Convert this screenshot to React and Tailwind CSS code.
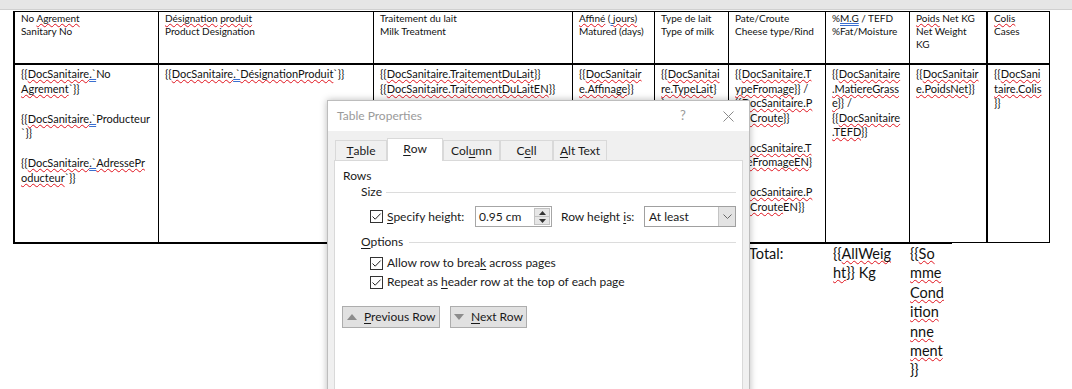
import React from "react";

const R = ({ children }) => (
  <span className="underline decoration-wavy decoration-[#e0141e] decoration-1 underline-offset-[1px] [text-decoration-skip-ink:none]">
    {children}
  </span>
);
const B = ({ children }) => (
  <span className="underline decoration-double decoration-[#3a6fd0] decoration-1 underline-offset-[1px] [text-decoration-skip-ink:none]">
    {children}
  </span>
);
const K = ({ children }) => <span className="underline decoration-1 underline-offset-[2px]">{children}</span>;

const cols = [
  {
    w: "w-[144px] border-r",
    head: [<>No <R>Agrement</R></>, <>Sanitary No</>],
    body: [
      <>{"{{"}<R>DocSanitaire</R><B>.`</B>No</>,
      <><R>Agrement</R>{"`}}"}</>,
      null,
      <>{"{{"}<R>DocSanitaire</R><B>.`</B>Producteur</>,
      <>{"`}}"}</>,
      null,
      <>{"{{"}<R>DocSanitaire</R><B>.`</B><R>AdressePr</R></>,
      <><R>oducteur</R>{"`}}"}</>,
    ],
  },
  {
    w: "w-[215px] border-r",
    head: [<><R>Désignation</R> <R>produit</R></>, <>Product Designation</>],
    body: [<>{"{{"}<R>DocSanitaire</R><B>.`</B><R>DésignationProduit</R>{"`}}"}</>],
  },
  {
    w: "w-[199px] border-r",
    head: [<>Traitement du lait</>, <>Milk Treatment</>],
    body: [
      <>{"{{"}<R>DocSanitaire.TraitementDuLait</R>{"}}"}</>,
      <>{"{{"}<R>DocSanitaire.TraitementDuLaitEN</R>{"}}"}</>,
    ],
  },
  {
    w: "w-[82px] border-r",
    head: [<><R>Affiné</R> (<B> </B><R>jours)</R></>, <>Matured (days)</>],
    body: [<>{"{{"}<R>DocSanitair</R></>, <><R>e.Affinage</R>{"}}"}</>],
  },
  {
    w: "w-[74px] border-r",
    head: [<>Type de lait</>, <>Type of milk</>],
    body: [<>{"{{"}<R>DocSanitai</R></>, <><R>re.TypeLait</R>{"}"}</>, <>{"}"}</>],
  },
  {
    w: "w-[97px] border-r",
    head: [<>Pate/Croute</>, <>Cheese type/Rind</>],
    body: [
      <>{"{{"}<R>DocSanitaire.T</R></>,
      <><R>ypeFromage</R>{"}} /"}</>,
      <>{"{{"}<R>DocSanitaire.P</R></>,
      <><R>ateCroute</R>{"}}"}</>,
      null,
      <>{"{{"}<R>DocSanitaire.T</R></>,
      <><R>ypeFromageEN</R>{"}"}</>,
      null,
      <>{"{{"}<R>DocSanitaire.P</R></>,
      <><R>ateCroute</R>EN{"}}"}</>,
    ],
  },
  {
    w: "w-[84px] border-r",
    head: [<>%<B>M.G</B> / TEFD</>, <>%Fat/Moisture</>],
    body: [
      <>{"{{"}<R>DocSanitaire</R></>,
      <><R>.MatiereGrass</R></>,
      <><R>e</R>{"}} /"}</>,
      <>{"{{"}<R>DocSanitaire</R></>,
      <><R>.TEFD</R>{"}}"}</>,
    ],
  },
  {
    w: "w-[78px] border-r-2",
    head: [<><R>Poids</R> Net KG</>, <>Net Weight</>, <>KG</>],
    body: [<>{"{{"}<R>DocSanitair</R></>, <><R>e.PoidsNet</R>{"}}"}</>],
  },
  {
    w: "w-[62px] border-r",
    head: [<><R>Colis</R></>, <>Cases</>],
    body: [<>{"{{"}<R>DocSani</R></>, <><R>taire.Colis</R></>, <>{"}}"}</>],
  },
];

function Lines({ lines }) {
  return lines.map((l, i) =>
    l === null ? (
      <div key={i} className="h-[15.5px]" />
    ) : (
      <div key={i} className="whitespace-nowrap">
        {l}
      </div>
    )
  );
}

function Check() {
  return (
    <div className="w-[13px] h-[13px] border border-[#333333] bg-white flex items-center justify-center shrink-0">
      <svg width="11" height="11" viewBox="0 0 11 11">
        <path d="M1.5 5.5 L4.2 8.2 L9.6 2.6" fill="none" stroke="#222" strokeWidth="1" />
      </svg>
    </div>
  );
}

function Tab({ children, w, sel }) {
  if (sel)
    return (
      <div className={`${w} h-[23px] mb-[-1px] relative z-10 bg-white border border-b-0 border-[#d9d9d9] flex items-center justify-center pb-[2px]`}>
        {children}
      </div>
    );
  return (
    <div className={`${w} h-[20px] bg-[#f0f0f0] border border-b-0 border-[#d9d9d9] flex items-center justify-center`}>
      {children}
    </div>
  );
}

function Dialog() {
  return (
    <div className="absolute left-[327px] top-[100px] w-[423px] h-[300px] border border-[#bdbdbd] bg-[#f0f0f0] shadow-[0_0_7px_rgba(0,0,0,0.28)] font-['Lato',sans-serif] text-[12px] text-[#1a1a1a]">
      <div className="h-[30px] bg-white flex items-center">
        <div className="pl-[9px] text-[#9a9a9a] flex-1">Table Properties</div>
        <div className="w-[48px] text-center text-[#9a9a9a] text-[13px]">?</div>
        <div className="w-[42px] flex items-center justify-center">
          <svg width="11" height="11" viewBox="0 0 11 11">
            <path d="M0.5 0.5 L10.5 10.5 M10.5 0.5 L0.5 10.5" stroke="#8a8a8a" strokeWidth="1" fill="none" />
          </svg>
        </div>
      </div>
      <div className="px-[6px] pt-[7px]">
        <div className="flex items-end pl-[1px]">
          <Tab w="w-[52px]"><K>T</K>able</Tab>
          <Tab w="w-[56px]" sel><K>R</K>ow</Tab>
          <Tab w="w-[57px]">Col<K>u</K>mn</Tab>
          <Tab w="w-[53px]">C<K>e</K>ll</Tab>
          <Tab w="w-[54px]"><K>A</K>lt Text</Tab>
        </div>
        <div className="h-[240px] bg-white border border-[#d9d9d9] leading-[16px]">
          <div className="pl-[8px] mt-[7px]">Rows</div>
          <div className="flex items-center pl-[26px] pr-[6px]">
            <span>Size</span>
            <div className="flex-1 ml-[4px] h-px bg-[#dcdcdc]" />
          </div>
          <div className="flex items-center mt-[6px] h-[21px] pl-[35px]">
            <Check />
            <div className="ml-[4px] w-[88px]"><K>S</K>pecify height:</div>
            <div className="w-[77px] h-[21px] border border-[#a6a6a6] bg-white flex items-center">
              <div className="flex-1 pl-[3px]">0.95 cm</div>
              <div className="w-[16px] h-[17px] mr-[1px] border border-[#c2c2c2] bg-[#e6e6e6] flex flex-col">
                <div className="flex-1 flex items-center justify-center border-b border-[#c2c2c2]">
                  <svg width="7" height="4" viewBox="0 0 7 4"><path d="M0 4 L3.5 0 L7 4Z" fill="#333" /></svg>
                </div>
                <div className="flex-1 flex items-center justify-center">
                  <svg width="7" height="4" viewBox="0 0 7 4"><path d="M0 0 L3.5 4 L7 0Z" fill="#333" /></svg>
                </div>
              </div>
            </div>
            <div className="ml-[9px] w-[83px]">Row height <K>i</K>s:</div>
            <div className="w-[92px] h-[21px] border border-[#a0a0a0] bg-white flex items-center">
              <div className="flex-1 pl-[4px]">At least</div>
              <div className="w-[17px] h-full bg-[#e3e3e3] border-l border-[#c4c4c4] flex items-center justify-center">
                <svg width="9" height="5" viewBox="0 0 9 5"><path d="M0.5 0.5 L4.5 4.5 L8.5 0.5" fill="none" stroke="#666" strokeWidth="1" /></svg>
              </div>
            </div>
          </div>
          <div className="flex items-center mt-[7px] pl-[26px] pr-[6px]">
            <span><K>O</K>ptions</span>
            <div className="flex-1 ml-[6px] h-px bg-[#dcdcdc]" />
          </div>
          <div className="flex items-center mt-[5px] pl-[35px]">
            <Check />
            <div className="ml-[4px]">Allow row to brea<K>k</K> across pages</div>
          </div>
          <div className="flex items-center mt-[3px] pl-[35px]">
            <Check />
            <div className="ml-[4px]">Repeat as <K>h</K>eader row at the top of each page</div>
          </div>
          <div className="flex mt-[16px] pl-[7px] gap-[10px]">
            <div className="w-[98px] h-[22px] border border-[#adadad] bg-[#e1e1e1] flex items-center pl-[4px]">
              <svg width="10" height="6" viewBox="0 0 10 6"><path d="M0 6 L5 0 L10 6Z" fill="#8c8c8c" /></svg>
              <span className="ml-[7px]"><K>P</K>revious Row</span>
            </div>
            <div className="w-[77px] h-[22px] border border-[#adadad] bg-[#e1e1e1] flex items-center pl-[3px]">
              <svg width="10" height="6" viewBox="0 0 10 6"><path d="M0 0 L5 6 L10 0Z" fill="#8c8c8c" /></svg>
              <span className="ml-[7px]"><K>N</K>ext Row</span>
            </div>
          </div>
        </div>
      </div>
    </div>
  );
}

export default function App() {
  return (
    <div className="relative w-[1072px] h-[389px] overflow-hidden bg-white text-black">
      <div className="h-[10px] bg-[#e6e6e6] border-b border-[#d0d0d0]" />
      <div className="mt-[1px] ml-[13px] w-[1037px] border-l-2 border-t border-black font-['Lato',sans-serif] text-[#111]">
        <div className="flex h-[53px] border-b-2 border-black leading-[13px] text-[10px]">
          {cols.map((c, i) => (
            <div key={i} className={`${c.w} border-black h-full pl-[6px]`}>
              <Lines lines={c.head} />
            </div>
          ))}
        </div>
        <div className="flex h-[178px] border-b border-black leading-[14.5px] text-[11px]">
          {cols.map((c, i) => (
            <div key={i} className={`${c.w} border-black h-full pl-[6px] pt-[2px]`}>
              <Lines lines={c.body} />
            </div>
          ))}
        </div>
      </div>
      <div className="ml-[13px] w-[939px] border-t border-black flex font-['Lato',sans-serif] text-[14.5px] leading-[19.4px] text-[#111]">
        <div className="w-[716px]" />
        <div className="w-[97px] pl-[20px]">Total:</div>
        <div className="w-[84px] pl-[7px]">
          <div className="whitespace-nowrap">{"{{"}<R>AllWeig</R></div>
          <div className="whitespace-nowrap"><R>ht</R>{"}} Kg"}</div>
        </div>
        <div className="w-[42px]">
          <div>{"{{"}<R>So</R></div>
          <div><R>mme</R></div>
          <div><R>Cond</R></div>
          <div><R>ition</R></div>
          <div><R>nne</R></div>
          <div><R>ment</R></div>
          <div>{"}}"}</div>
        </div>
      </div>
      <Dialog />
    </div>
  );
}
